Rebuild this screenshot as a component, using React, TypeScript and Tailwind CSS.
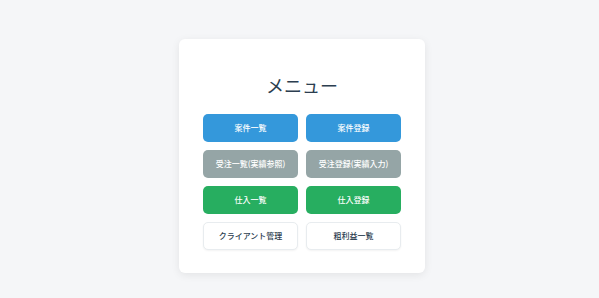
const font = { fontFamily: '"Noto Sans CJK JP", "Noto Sans", sans-serif' };

const items = [
  { label: "案件一覧", cls: "bg-[#3498db] text-white" },
  { label: "案件登録", cls: "bg-[#3498db] text-white" },
  { label: "受注一覧(実績参照)", cls: "bg-[#95a5a6] text-white" },
  { label: "受注登録(実績入力)", cls: "bg-[#95a5a6] text-white" },
  { label: "仕入一覧", cls: "bg-[#27ae60] text-white" },
  { label: "仕入登録", cls: "bg-[#27ae60] text-white" },
  { label: "クライアント管理", cls: "bg-white text-[#2c3e50] border border-[#e8ecef] shadow-[0_1px_2px_rgba(0,0,0,0.05)]" },
  { label: "粗利益一覧", cls: "bg-white text-[#2c3e50] border border-[#e8ecef] shadow-[0_1px_2px_rgba(0,0,0,0.05)]" },
];

export default function App() {
  return (
    <div
      className="min-h-[298px] w-full bg-[#f5f6f8] flex justify-center pt-[39px] pl-[5px]"
      style={font}
    >
      <div className="w-[246px] h-[234px] bg-white rounded-[6px] shadow-[0_2px_8px_rgba(0,0,0,0.08)] px-6 pt-[34px] pb-[23px]">
        <h1 className="text-center text-[18px] leading-[24px] text-[#2c3e50] mb-[17px]">メニュー</h1>
        <div className="grid grid-cols-2 gap-2">
          {items.map((it) => (
            <button
              key={it.label}
              className={`h-[28px] rounded-[5px] text-[8px] leading-none font-medium flex items-center justify-center ${it.cls}`}
            >
              {it.label}
            </button>
          ))}
        </div>
      </div>
    </div>
  );
}
